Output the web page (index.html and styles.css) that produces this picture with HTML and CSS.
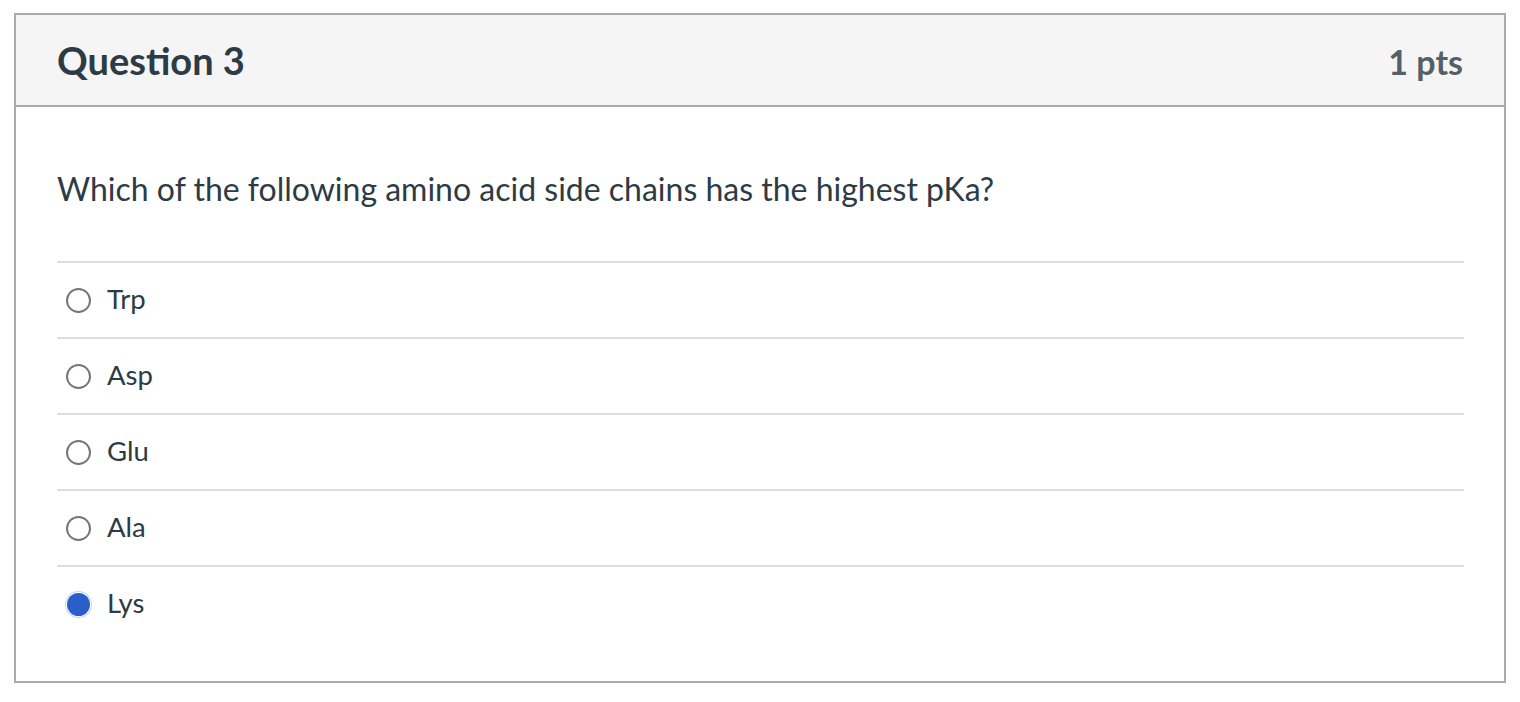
FILE: index.html
```html
<!DOCTYPE html>
<html lang="en">
<head>
<meta charset="utf-8">
<title>Question 3</title>
<link rel="stylesheet" href="styles.css">
</head>
<body>
<div class="page">
  <div class="question">
    <div class="header">
      <h2 class="title">Question 3</h2>
      <div class="pts">1 pts</div>
    </div>
    <div class="body">
      <p class="text">Which of the following amino acid side chains has the highest pKa?</p>
      <div class="answers">
        <div class="answer"><span class="radio"></span><span class="label">Trp</span></div>
        <div class="answer"><span class="radio"></span><span class="label">Asp</span></div>
        <div class="answer"><span class="radio"></span><span class="label">Glu</span></div>
        <div class="answer"><span class="radio"></span><span class="label">Ala</span></div>
        <div class="answer"><span class="radio checked"></span><span class="label">Lys</span></div>
      </div>
    </div>
  </div>
</div>
</body>
</html>
```
FILE: styles.css
```css
html, body {
  margin: 0;
  padding: 0;
  background: #fff;
}
body {
  font-family: Lato, "Noto Sans", sans-serif;
  color: #2d3b45;
}
.page {
  padding: 13px 14px;
}
.question {
  width: 1488px;
  border: 2px solid #aaaaaa;
}
.header {
  height: 90px;
  background: #f5f5f5;
  border-bottom: 2px solid #aaaaaa;
  display: flex;
  align-items: center;
  justify-content: space-between;
  padding: 0 41px;
}
.title {
  margin: 0;
  font-size: 38px;
  font-weight: 700;
  color: #2d3b45;
  position: relative;
  top: 0;
}
.pts {
  font-size: 34px;
  font-weight: 700;
  color: #555f66;
  position: relative;
  top: 1px;
}
.body {
  padding: 0 40px 40px 41px;
}
.text {
  margin: 0;
  padding: 62px 0 0;
  height: 92px;
  font-size: 32px;
  line-height: 40px;
}
.answers {
  display: flex;
  flex-direction: column;
}
.answer {
  height: 74px;
  border-top: 2px solid #dddddd;
  display: flex;
  align-items: center;
}
.radio {
  box-sizing: border-box;
  width: 25px;
  height: 25px;
  border: 2px solid #777777;
  border-radius: 50%;
  margin-left: 9px;
  margin-right: 16px;
}
.radio.checked {
  border: none;
  background: #2a5ec9;
  box-shadow: 0 0 0 1px #ffffff, 0 0 0 2px #c9d6f2;
  width: 23px;
  height: 23px;
  margin-left: 10px;
  margin-right: 17px;
}
.label {
  font-size: 27.5px;
  line-height: 30px;
  position: relative;
  top: -1px;
}
```
